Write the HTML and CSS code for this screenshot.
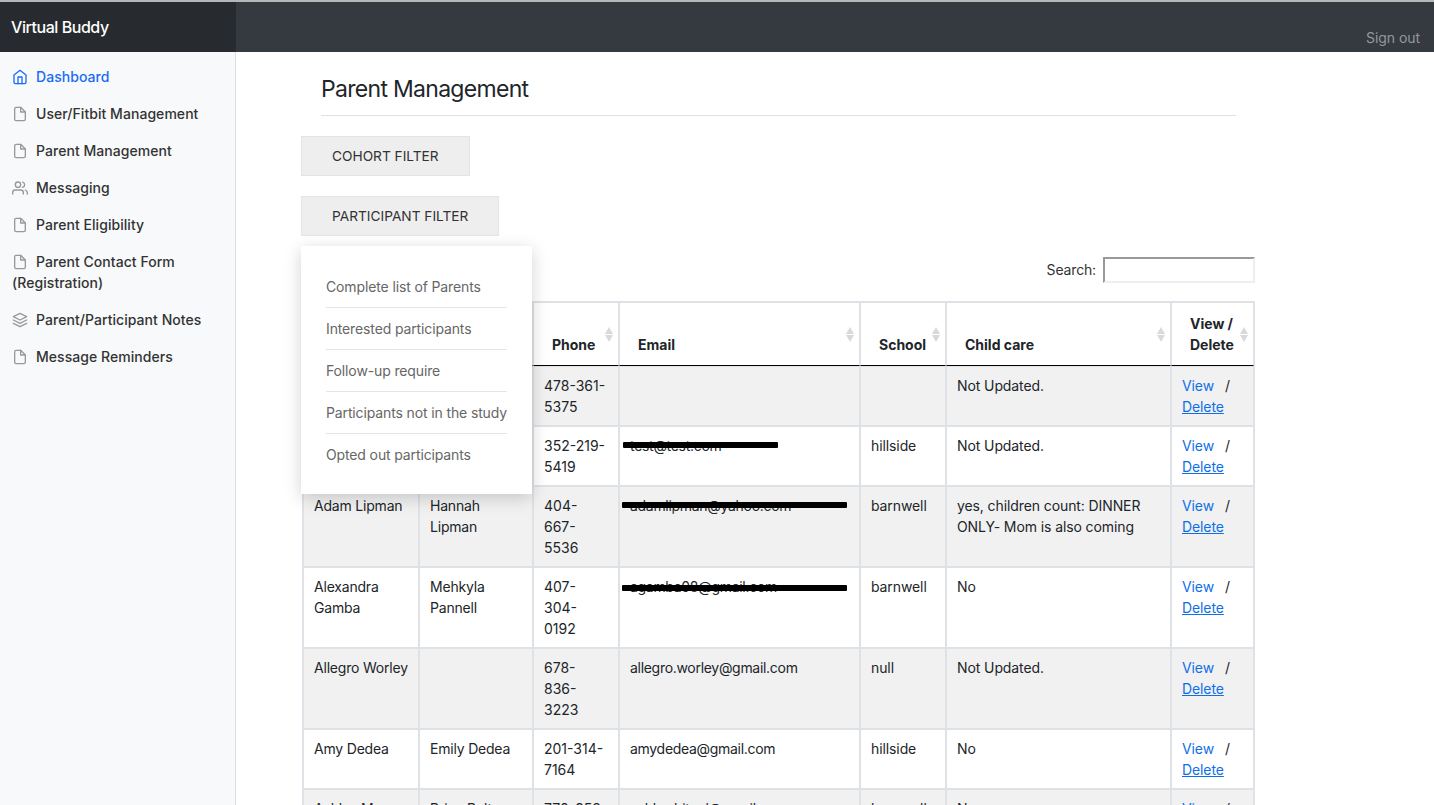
FILE: index.html
```html
<!DOCTYPE html>
<html lang="en">
<head>
<meta charset="utf-8">
<title>Parent Management</title>
<link rel="stylesheet" href="styles.css">
</head>
<body>
<header class="topbar">
  <a class="brand">Virtual Buddy</a>
  <a class="signout">Sign out</a>
</header>
<div class="shell">
  <nav class="sidebar">
    <a class="nav-item active"><svg class="ico" viewBox="0 0 24 24"><path d="M3 9l9-7 9 7v11a2 2 0 0 1-2 2H5a2 2 0 0 1-2-2z"/><path d="M9 22V12h6v10"/></svg>Dashboard</a>
    <a class="nav-item"><svg class="ico" viewBox="0 0 24 24"><path d="M13 2H6a2 2 0 0 0-2 2v16a2 2 0 0 0 2 2h12a2 2 0 0 0 2-2V9z"/><path d="M13 2v7h7"/></svg>User/Fitbit Management</a>
    <a class="nav-item"><svg class="ico" viewBox="0 0 24 24"><path d="M13 2H6a2 2 0 0 0-2 2v16a2 2 0 0 0 2 2h12a2 2 0 0 0 2-2V9z"/><path d="M13 2v7h7"/></svg>Parent Management</a>
    <a class="nav-item"><svg class="ico" viewBox="0 0 24 24"><path d="M17 21v-2a4 4 0 0 0-4-4H5a4 4 0 0 0-4 4v2"/><circle cx="9" cy="7" r="4"/><path d="M23 21v-2a4 4 0 0 0-3-3.87"/><path d="M16 3.13a4 4 0 0 1 0 7.75"/></svg>Messaging</a>
    <a class="nav-item"><svg class="ico" viewBox="0 0 24 24"><path d="M13 2H6a2 2 0 0 0-2 2v16a2 2 0 0 0 2 2h12a2 2 0 0 0 2-2V9z"/><path d="M13 2v7h7"/></svg>Parent Eligibility</a>
    <a class="nav-item"><svg class="ico" viewBox="0 0 24 24"><path d="M13 2H6a2 2 0 0 0-2 2v16a2 2 0 0 0 2 2h12a2 2 0 0 0 2-2V9z"/><path d="M13 2v7h7"/></svg>Parent Contact Form (Registration)</a>
    <a class="nav-item"><svg class="ico" viewBox="0 0 24 24"><path d="M12 2L2 7l10 5 10-5-10-5z"/><path d="M2 17l10 5 10-5"/><path d="M2 12l10 5 10-5"/></svg>Parent/Participant Notes</a>
    <a class="nav-item"><svg class="ico" viewBox="0 0 24 24"><path d="M13 2H6a2 2 0 0 0-2 2v16a2 2 0 0 0 2 2h12a2 2 0 0 0 2-2V9z"/><path d="M13 2v7h7"/></svg>Message Reminders</a>
  </nav>
  <main class="content">
    <h2 class="page-title">Parent Management</h2>
    <div class="filter-block"><button class="filter-btn">COHORT FILTER</button></div>
    <div class="filter-block filter-last">
      <button class="filter-btn">PARTICIPANT FILTER</button>
      <ul class="filter-menu">
        <li>Complete list of Parents</li>
        <li>Interested participants</li>
        <li>Follow-up require</li>
        <li>Participants not in the study</li>
        <li>Opted out participants</li>
      </ul>
    </div>
    <div class="search-row"><label class="search-label">Search:</label><input class="search-input" type="text"></div>
    <table class="parents">
      <colgroup><col class="c1"><col class="c2"><col class="c3"><col class="c4"><col class="c5"><col class="c6"><col class="c7"></colgroup>
      <thead>
        <tr>
          <th class="sort"></th><th class="sort"></th><th class="sort">Phone</th><th class="sort">Email</th><th class="sort">School</th><th class="sort">Child care</th><th class="sort">View / Delete</th>
        </tr>
      </thead>
      <tbody>
        <tr class="odd"><td></td><td></td><td class="phone">478-361-5375</td><td class="email"></td><td></td><td>Not Updated.</td><td><a class="lnk">View</a> <span class="sep">/</span> <a class="lnk del">Delete</a></td></tr>
        <tr><td></td><td></td><td class="phone">352-219-5419</td><td class="email mail"><span class="scrib s1"></span>test@test.com</td><td>hillside</td><td>Not Updated.</td><td><a class="lnk">View</a> <span class="sep">/</span> <a class="lnk del">Delete</a></td></tr>
        <tr class="odd"><td>Adam Lipman</td><td>Hannah Lipman</td><td class="phone">404-667-5536</td><td class="email mail"><span class="scrib s2"></span>adamlipman@yahoo.com</td><td>barnwell</td><td>yes, children count: DINNER ONLY- Mom is also coming</td><td><a class="lnk">View</a> <span class="sep">/</span> <a class="lnk del">Delete</a></td></tr>
        <tr><td>Alexandra Gamba</td><td>Mehkyla Pannell</td><td class="phone">407-304-0192</td><td class="email mail"><span class="scrib s3"></span>agamba08@gmail.com</td><td>barnwell</td><td>No</td><td><a class="lnk">View</a> <span class="sep">/</span> <a class="lnk del">Delete</a></td></tr>
        <tr class="odd"><td class="one-line">Allegro Worley</td><td></td><td class="phone">678-<br>836-<br>3223</td><td class="email">allegro.worley@gmail.com</td><td>null</td><td>Not Updated.</td><td><a class="lnk">View</a> <span class="sep">/</span> <a class="lnk del">Delete</a></td></tr>
        <tr><td>Amy Dedea</td><td>Emily Dedea</td><td class="phone">201-314-7164</td><td class="email">amydedea@gmail.com</td><td>hillside</td><td>No</td><td><a class="lnk">View</a> <span class="sep">/</span> <a class="lnk del">Delete</a></td></tr>
        <tr class="odd"><td>Ashley Moore</td><td>Brian Bolton</td><td class="phone">770-958-1234</td><td class="email">ashley.bitnel@gmail.com</td><td>barnwell</td><td>No</td><td><a class="lnk">View</a> <span class="sep">/</span> <a class="lnk del">Delete</a></td></tr>
      </tbody>
    </table>
  </main>
</div>
</body>
</html>
```
FILE: styles.css
```css
* { box-sizing: border-box; }
html, body { height: 100%; }
body {
  margin: 0;
  height: 805px;
  overflow: hidden;
  background: #fff;
  color: #212529;
  font-family: Inter, "Noto Sans", "Liberation Sans", sans-serif;
  font-size: 14px;
  line-height: 21px;
}
.topbar {
  height: 52px;
  display: flex;
  justify-content: space-between;
  background: #343a40;
  border-top: 2px solid #b5b7b9;
}
.brand {
  width: 236px;
  padding: 14px 11px 0;
  background: #272b2f;
  color: #fff;
  font-size: 16px;
  font-weight: 500;
  line-height: 23px;
  letter-spacing: -0.45px;
}
.signout {
  padding: 25px 14px 0 0;
  color: #93989d;
  line-height: 21px;
  letter-spacing: -0.05px;
}
.shell { display: flex; height: 753px; }
.sidebar {
  width: 236px;
  flex: none;
  padding-top: 6px;
  background: #f8f9fa;
  border-right: 1px solid #dcdee0;
}
.nav-item {
  display: block;
  padding: 8px 12px;
  color: #333;
  font-weight: 500;
  font-size: 14px;
  line-height: 21px;
  letter-spacing: 0.05px;
}
.nav-item.active { color: #1a6cf5; }
.ico {
  width: 16px;
  height: 16px;
  margin-right: 8px;
  vertical-align: -3px;
  fill: none;
  stroke: #999;
  stroke-width: 2;
  stroke-linecap: round;
  stroke-linejoin: round;
}
.active .ico { stroke: #1a6cf5; }
.content { flex: 1; padding: 0 0 0 65px; min-width: 0; }
.page-title {
  width: 915px;
  height: 64px;
  margin: 0 0 20px 20px;
  padding-top: 22px;
  border-bottom: 1px solid #dee2e6;
  font-size: 23px;
  font-weight: 400;
  line-height: 30px;
  letter-spacing: -0.7px;
}
.filter-block { margin-bottom: 20px; position: relative; }
.filter-last { margin-bottom: 0; }
.filter-btn {
  display: block;
  height: 40px;
  padding: 0 30px;
  background: #eee;
  border: 1px solid #e4e4e4;
  border-radius: 0;
  color: #333;
  font-family: inherit;
  font-size: 13.7px;
  line-height: 38px;
}
.filter-menu {
  position: absolute;
  left: 0;
  top: 50px;
  z-index: 5;
  width: 231px;
  height: 248px;
  margin: 0;
  padding: 20px 25px 0;
  list-style: none;
  background: #fff;
  color: #666;
  letter-spacing: -0.13px;
  box-shadow: 0 4px 16px rgba(0, 0, 0, 0.18);
}
.filter-menu li {
  height: 42px;
  padding-top: 10px;
  border-bottom: 1px solid #e3e6e9;
  white-space: nowrap;
}
.filter-menu li:last-child { border-bottom: 0; }
.search-row {
  width: 954px;
  height: 65px;
  padding-top: 21px;
  display: flex;
  justify-content: flex-end;
  align-items: flex-start;
}
.search-label { margin-right: 7px; line-height: 26px; color: #333; letter-spacing: -0.15px; }
.search-input {
  width: 152px;
  height: 26px;
  border: 2px solid;
  border-color: #999 #eee #eee #999;
  background: #fff;
  padding: 0;
}
.parents {
  width: 953px;
  margin-left: 1px;
  table-layout: fixed;
  border-collapse: separate;
  border-spacing: 0;
  border-top: 1px solid #dee2e6;
  border-left: 1px solid #dee2e6;
  border-right: 1px solid #dee2e6;
}
.c1 { width: 116px; }
.c2 { width: 114px; }
.c3 { width: 86px; }
.c4 { width: 241px; }
.c5 { width: 86px; }
.c6 { width: 225px; }
.c7 { width: 83px; }
.parents th, .parents td {
  border: 1px solid #dee2e6;
  vertical-align: top;
  text-align: left;
}
.parents th {
  position: relative;
  height: 63px;
  padding: 10px 18px 10px;
  vertical-align: bottom;
  font-weight: 700;
  color: #212529;
  border-bottom: 1px solid #000;
}
.parents td { padding: 8px 10px; letter-spacing: -0.1px; }
.parents td:nth-child(-n+2) { letter-spacing: -0.2px; }
.parents .phone { letter-spacing: 0; }
.parents .email { letter-spacing: -0.3px; }
.parents .one-line { white-space: nowrap; }
.parents .odd td { background: #f1f1f1; }
.sort::before, .sort::after {
  content: "";
  position: absolute;
  right: 5px;
  border-left: 4px solid transparent;
  border-right: 4px solid transparent;
}
.sort::before { top: 24px; border-bottom: 7px solid #d9d9d9; }
.sort::after { top: 32px; border-top: 7px solid #d9d9d9; }
.mail { position: relative; }
.scrib {
  position: absolute;
  height: 6px;
  background: #000;
  border-radius: 1px;
}
.s1 { left: 3px; top: 15px; width: 155px; }
.s2 { left: 2px; top: 15px; width: 225px; }
.s3 { left: 2px; top: 17px; width: 225px; }
.lnk { color: #0f6fe8; }
.del { text-decoration: underline; }
.sep { margin-left: 7px; }
```
